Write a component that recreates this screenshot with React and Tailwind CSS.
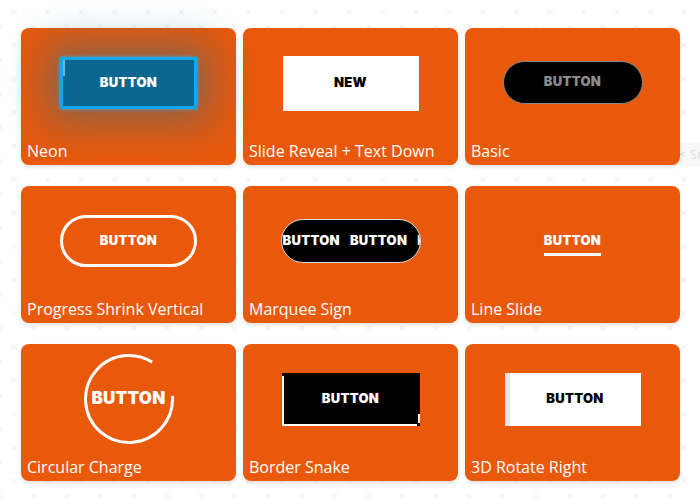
import React from "react";

// --- 공통 스타일 ---
const labelFont = { fontFamily: '"Open Sans", "Noto Sans", sans-serif' };
const btnFont = { fontFamily: 'Inter, "Liberation Sans", sans-serif' };

// 배경의 흐린 × 패턴
function Backdrop() {
  return (
    <svg className="absolute inset-0 h-full w-full" aria-hidden="true">
      <defs>
        <pattern id="xmarks" width="33.5" height="33.5" patternUnits="userSpaceOnUse">
          <g stroke="#efefef" strokeWidth="1">
            <path d="M11.5 9.5l5 5M16.5 9.5l-5 5" />
            <path d="M-2.5 24.5l5 5M2.5 24.5l-5 5" />
            <path d="M31 24.5l5 5M36 24.5l-5 5" />
          </g>
        </pattern>
      </defs>
      <rect width="100%" height="100%" fill="url(#xmarks)" />
    </svg>
  );
}

function Card({ label, children }) {
  return (
    <div className="flex h-[137px] flex-col rounded-lg bg-[#e8590c] shadow-[0_2px_4px_rgba(0,0,0,0.12)]">
      <div className="flex h-[110px] items-center justify-center">{children}</div>
      <div
        className="mt-[3px] px-[6px] text-[16px] leading-[20px] text-white"
        style={labelFont}
      >
        {label}
      </div>
    </div>
  );
}

const Txt = ({ className = "", children }) => (
  <span
    className={`text-[13px] font-black tracking-[0.3px] ${className}`}
    style={btnFont}
  >
    {children}
  </span>
);

export default function App() {
  return (
    <main className="relative h-[500px] w-[700px] overflow-hidden bg-white">
      <Backdrop />

      {/* 오른쪽 가장자리의 흐린 오버레이 */}
      <div
        className="absolute left-[670px] top-[143px] flex h-[23px] w-[40px] items-center gap-1 border-l border-[#eeeeee] bg-[#f8f8f8] pl-[4px] text-[13px] text-[#dedede]"
        style={labelFont}
      >
        <span>✂</span>
        <span>Sn</span>
      </div>

      <div className="relative grid grid-cols-[215px_215px_215px] gap-x-[7px] gap-y-[21px] pl-[21px] pt-[28px]">
        {/* Neon */}
        <Card label="Neon">
          <div className="relative flex h-[52px] w-[137px] items-center justify-center border-[3px] border-[#17a6ee] bg-[#0b6690] shadow-[0_0_3px_#3bb8f5,0_0_40px_14px_rgba(25,110,150,0.45)]">
            <span className="absolute left-0 top-0 h-[16px] w-[2px] bg-[#6fb6d8]" />
            <Txt className="text-white">BUTTON</Txt>
          </div>
        </Card>

        {/* Slide Reveal */}
        <Card label="Slide Reveal + Text Down">
          <div className="flex h-[55px] w-[136px] items-center justify-center bg-white">
            <Txt className="text-black">NEW</Txt>
          </div>
        </Card>

        {/* Basic */}
        <Card label="Basic">
          <div className="mb-[2px] flex h-[43px] w-[140px] items-center justify-center rounded-full border border-[#8a8a8a] bg-black">
            <Txt className="text-[#8c8c8c]">BUTTON</Txt>
          </div>
        </Card>

        {/* Progress Shrink Vertical */}
        <Card label="Progress Shrink Vertical">
          <div className="flex h-[52px] w-[137px] items-center justify-center rounded-full border-[3px] border-white">
            <Txt className="text-white">BUTTON</Txt>
          </div>
        </Card>

        {/* Marquee Sign */}
        <Card label="Marquee Sign">
          <div className="flex h-[44px] w-[140px] items-center overflow-hidden rounded-full border border-[#dddddd] bg-black">
            <div className="flex gap-[10px] whitespace-nowrap pl-[1px]">
              <Txt className="text-white">BUTTON</Txt>
              <Txt className="text-white">BUTTON</Txt>
              <Txt className="text-white">BUTTON</Txt>
            </div>
          </div>
        </Card>

        {/* Line Slide */}
        <Card label="Line Slide">
          <div className="flex flex-col items-stretch pt-[5px]">
            <Txt className="text-white">BUTTON</Txt>
            <div className="mt-[2px] h-[3px] bg-white" />
          </div>
        </Card>

        {/* Circular Charge */}
        <Card label="Circular Charge">
          <div className="relative flex h-[92px] w-[92px] items-center justify-center">
            <svg className="absolute inset-0" width="92" height="92" viewBox="0 0 92 92">
              <circle
                cx="46"
                cy="46"
                r="43.5"
                fill="none"
                stroke="white"
                strokeWidth="3"
                strokeDasharray="232 300"
                transform="rotate(-4 46 46)"
              />
            </svg>
            <span
              className="relative text-[17px] font-black tracking-[0.2px] text-white"
              style={btnFont}
            >
              BUTTON
            </span>
          </div>
        </Card>

        {/* Border Snake */}
        <Card label="Border Snake">
          <div className="relative flex h-[53px] w-[138px] items-center justify-center bg-black">
            <span className="absolute bottom-0 left-0 top-[3px] w-[2px] bg-white" />
            <span className="absolute bottom-0 left-0 h-[2px] w-[135px] bg-white" />
            <span className="absolute bottom-[3px] right-0 h-[9px] w-[2px] bg-white" />
            <Txt className="text-white">BUTTON</Txt>
          </div>
        </Card>

        {/* 3D Rotate Right */}
        <Card label="3D Rotate Right">
          <div className="flex h-[53px] w-[136px] bg-white">
            <div className="w-[5px] bg-[#e6e6e6]" />
            <div className="flex flex-1 items-center justify-center">
              <Txt className="text-black">BUTTON</Txt>
            </div>
          </div>
        </Card>
      </div>
    </main>
  );
}
